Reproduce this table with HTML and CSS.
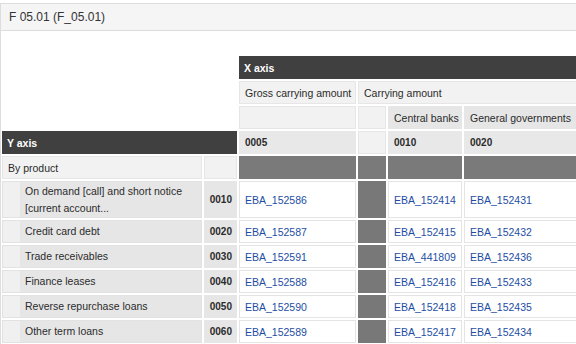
FILE: index.html
```html
<!DOCTYPE html>
<html>
<head>
<meta charset="utf-8">
<link rel="stylesheet" href="styles.css">
</head>
<body>
<div class="panel">
  <div class="panel-head">F 05.01 (F_05.01)</div>
  <div class="panel-body">
    <table class="grid">
      <colgroup>
        <col class="c-label"><col class="c-code"><col class="c-gross"><col class="c-carry"><col class="c-cb"><col class="c-gg">
      </colgroup>
      <tr class="r-std">
        <td class="blank" colspan="2"></td>
        <td class="axis" colspan="4">X axis</td>
      </tr>
      <tr class="r-std">
        <td class="blank" colspan="2"></td>
        <td class="hd">Gross carrying amount</td>
        <td class="hd" colspan="3">Carrying amount</td>
      </tr>
      <tr class="r-std">
        <td class="blank" colspan="2"></td>
        <td class="hd"></td>
        <td class="hd"></td>
        <td class="hd2">Central banks</td>
        <td class="hd2">General governments</td>
      </tr>
      <tr class="r-std">
        <td class="axis" colspan="2">Y axis</td>
        <td class="code-h">0005</td>
        <td class="hd"></td>
        <td class="code-h">0010</td>
        <td class="code-h">0020</td>
      </tr>
      <tr class="r-std">
        <td class="hd">By product</td>
        <td class="hd"></td>
        <td class="shade"></td>
        <td class="shade"></td>
        <td class="shade"></td>
        <td class="shade"></td>
      </tr>
      <tr class="r-tall">
        <td class="lbl"><div class="lbl-in">On demand [call] and short notice [current account...</div></td>
        <td class="code">0010</td>
        <td class="data"><a>EBA_152586</a></td>
        <td class="dark"></td>
        <td class="data"><a>EBA_152414</a></td>
        <td class="data"><a>EBA_152431</a></td>
      </tr>
      <tr class="r-std">
        <td class="lbl"><div class="lbl-in">Credit card debt</div></td>
        <td class="code">0020</td>
        <td class="data"><a>EBA_152587</a></td>
        <td class="dark"></td>
        <td class="data"><a>EBA_152415</a></td>
        <td class="data"><a>EBA_152432</a></td>
      </tr>
      <tr class="r-std">
        <td class="lbl"><div class="lbl-in">Trade receivables</div></td>
        <td class="code">0030</td>
        <td class="data"><a>EBA_152591</a></td>
        <td class="dark"></td>
        <td class="data"><a>EBA_441809</a></td>
        <td class="data"><a>EBA_152436</a></td>
      </tr>
      <tr class="r-std">
        <td class="lbl"><div class="lbl-in">Finance leases</div></td>
        <td class="code">0040</td>
        <td class="data"><a>EBA_152588</a></td>
        <td class="dark"></td>
        <td class="data"><a>EBA_152416</a></td>
        <td class="data"><a>EBA_152433</a></td>
      </tr>
      <tr class="r-std">
        <td class="lbl"><div class="lbl-in">Reverse repurchase loans</div></td>
        <td class="code">0050</td>
        <td class="data"><a>EBA_152590</a></td>
        <td class="dark"></td>
        <td class="data"><a>EBA_152418</a></td>
        <td class="data"><a>EBA_152435</a></td>
      </tr>
      <tr class="r-std">
        <td class="lbl"><div class="lbl-in">Other term loans</div></td>
        <td class="code">0060</td>
        <td class="data"><a>EBA_152589</a></td>
        <td class="dark"></td>
        <td class="data"><a>EBA_152417</a></td>
        <td class="data"><a>EBA_152434</a></td>
      </tr>
    </table>
  </div>
</div>
</body>
</html>
```

FILE: styles.css
```css
html, body {
  margin: 0;
  padding: 0;
  background: #fff;
  overflow: hidden;
}
body {
  padding-top: 3px;
  font-family: "Liberation Sans", Arial, sans-serif;
  color: #2b2b2b;
}
.panel {
  border: 1px solid #dddddd;
  border-right: none;
  width: 700px;
}
.panel-head {
  background: #f5f5f5;
  border-bottom: 1px solid #dddddd;
  height: 26px;
  line-height: 26px;
  padding-left: 8px;
  font-size: 12px;
  color: #333;
}
.panel-body {
  padding-top: 23px;
}
.grid {
  border-collapse: separate;
  border-spacing: 2px;
  table-layout: fixed;
  width: 656px;
  margin-left: -1px;
  font-size: 10.5px;
}
.c-label { width: 200px; }
.c-code { width: 33px; }
.c-gross { width: 117px; }
.c-carry { width: 28px; }
.c-cb { width: 74px; }
.c-gg { width: 190px; }
td {
  padding: 0 5px;
  box-sizing: border-box;
  white-space: nowrap;
  overflow: hidden;
}
.r-std td { height: 23px; }
.r-tall td { height: 37px; }
.blank { background: #fff; }
.axis {
  background: #404040;
  color: #fff;
  font-weight: bold;
}
.hd {
  background: #f2f2f2;
  border: 1px solid #e6e6e6;
}
.hd2 {
  background: #e6e6e6;
  border: 1px solid #e6e6e6;
}
.code-h {
  background: #e8e8e8;
  border: 1px solid #e8e8e8;
  font-weight: bold;
  font-size: 10px;
}
.shade {
  background: #7a7a7a;
}
.dark {
  background: #787878;
}
.lbl {
  background: #f0f0f0;
  border: 1px solid #e2e2e2;
  padding: 0 0 0 17px;
  white-space: normal;
}
.lbl-in {
  background: #e6e6e6;
  height: 100%;
  display: flex;
  align-items: center;
  padding: 0 4px 0 5px;
  line-height: 17px;
  box-sizing: border-box;
  min-height: 21px;
}
.r-tall .lbl-in { min-height: 35px; }
.code {
  background: #e6e6e6;
  font-weight: bold;
  font-size: 10px;
  text-align: right;
  padding-right: 5px;
}
.data {
  background: #fff;
  border: 1px solid #e4e4e4;
}
.data a {
  color: #1d4ea3;
  text-decoration: none;
}
```
